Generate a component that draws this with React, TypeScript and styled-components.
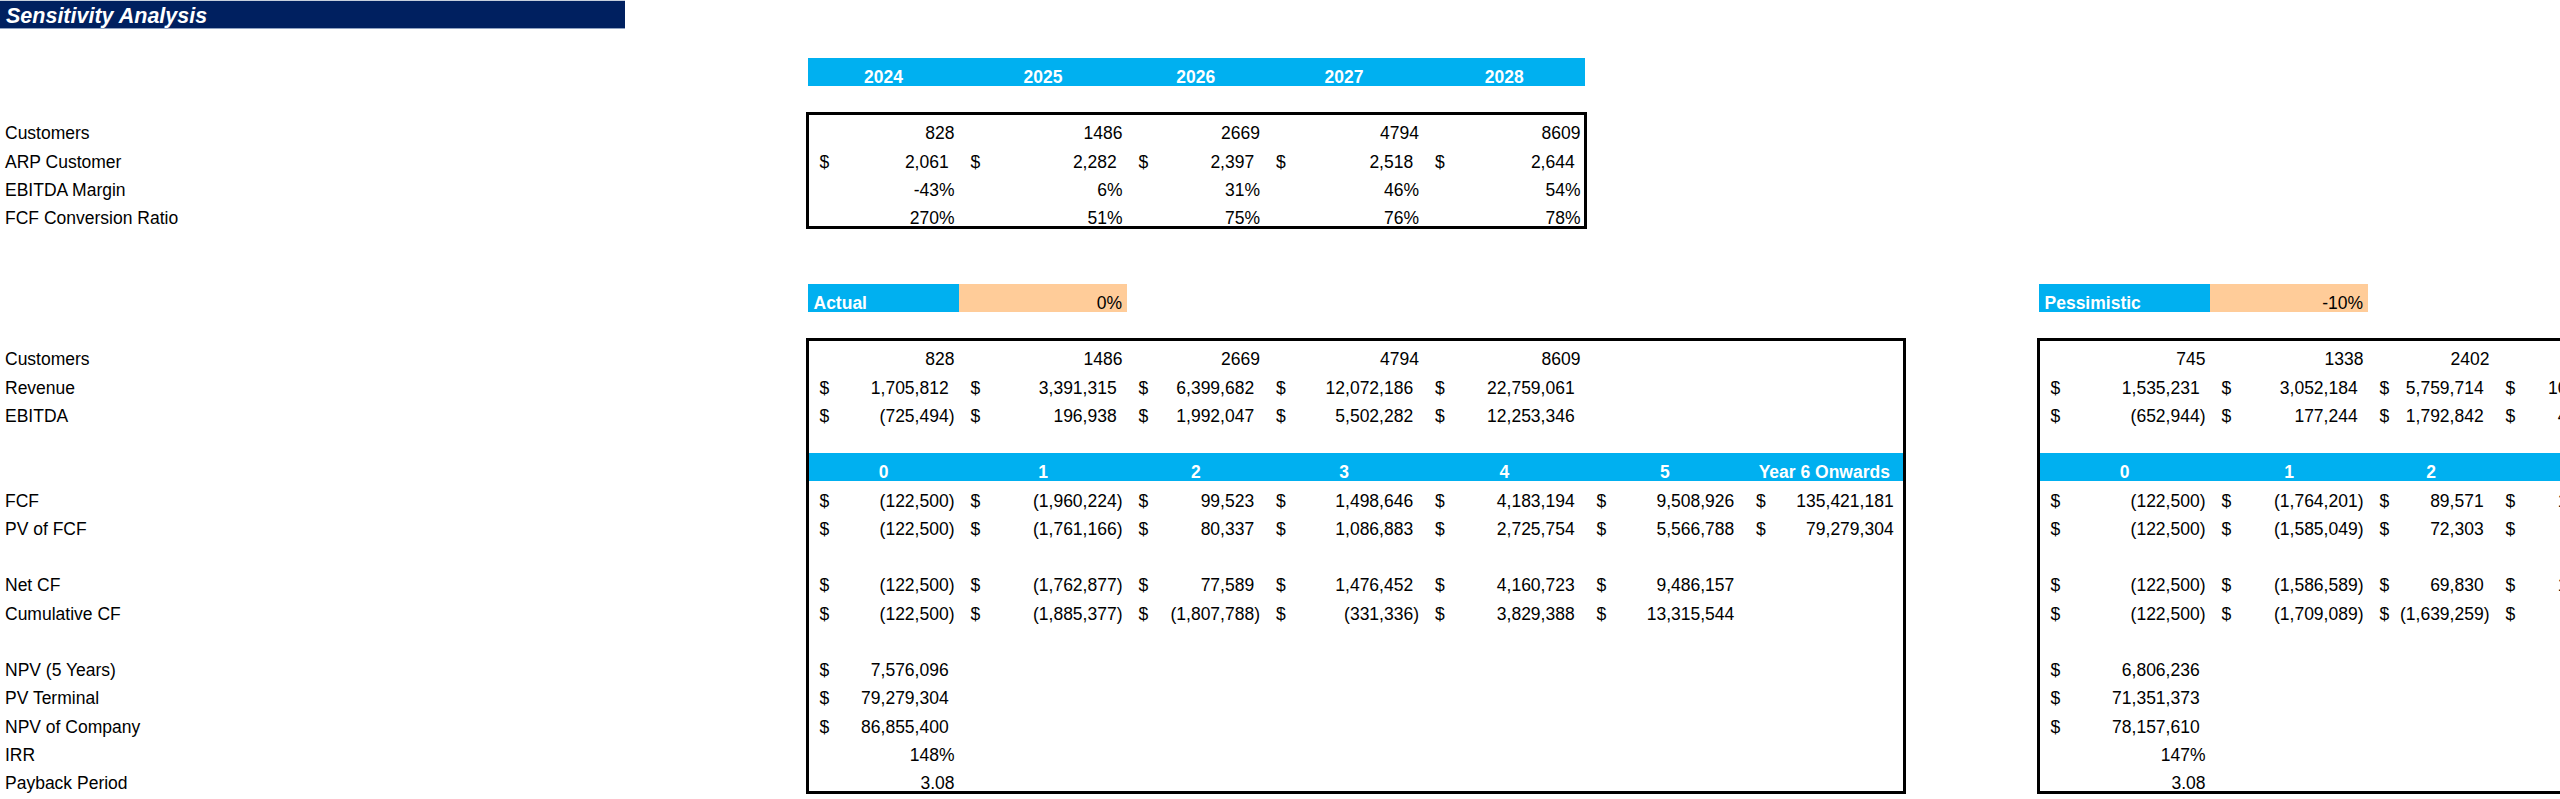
import React from "react"
import styled, { createGlobalStyle } from "styled-components"

// one spreadsheet row, in px
const ROW = 28.25
const FIRST_ROW = 29.4

const BLUE = "#00b0f0"
const PEACH = "#ffcc99"
const NAVY = "#002060"

const ACTUAL_WIDTHS = [151, 168, 137.5, 159, 161.5, 159.6, 159.4]
const PESS_WIDTHS = [171, 158, 126, 152, 160, 160, 160]

const YEARS = ["2024", "2025", "2026", "2027", "2028"]
const PERIODS = ["0", "1", "2", "3", "4", "5", "Year 6 Onwards"]

const TOP_ROWS = [
	["828", "1486", "2669", "4794", "8609"],
	["$ 2,061", "$ 2,282", "$ 2,397", "$ 2,518", "$ 2,644"],
	["-43%", "6%", "31%", "46%", "54%"],
	["270%", "51%", "75%", "76%", "78%"],
]

type BoxRow = string[] | "header" | null

interface Scenario {
	name: string
	pct: string
	widths: number[]
	offset: number
	// how many period headers are drawn (the rest runs off the sheet)
	periods: number
	rows: BoxRow[]
}

const SCENARIOS: Scenario[] = [
	{
		name: "Actual",
		pct: "0%",
		widths: ACTUAL_WIDTHS,
		offset: 0,
		periods: 7,
		rows: [
			["828", "1486", "2669", "4794", "8609"],
			["$ 1,705,812", "$ 3,391,315", "$ 6,399,682", "$ 12,072,186", "$ 22,759,061"],
			["$ (725,494)", "$ 196,938", "$ 1,992,047", "$ 5,502,282", "$ 12,253,346"],
			null,
			"header",
			["$ (122,500)", "$ (1,960,224)", "$ 99,523", "$ 1,498,646", "$ 4,183,194", "$ 9,508,926", "$ 135,421,181"],
			["$ (122,500)", "$ (1,761,166)", "$ 80,337", "$ 1,086,883", "$ 2,725,754", "$ 5,566,788", "$ 79,279,304"],
			null,
			["$ (122,500)", "$ (1,762,877)", "$ 77,589", "$ 1,476,452", "$ 4,160,723", "$ 9,486,157"],
			["$ (122,500)", "$ (1,885,377)", "$ (1,807,788)", "$ (331,336)", "$ 3,829,388", "$ 13,315,544"],
			null,
			["$ 7,576,096"],
			["$ 79,279,304"],
			["$ 86,855,400"],
			["148%"],
			["3.08"],
		],
	},
	{
		name: "Pessimistic",
		pct: "-10%",
		widths: PESS_WIDTHS,
		offset: 135,
		periods: 3,
		rows: [
			["745", "1338", "2402"],
			["$ 1,535,231", "$ 3,052,184", "$ 5,759,714", "$ 10,864,967"],
			["$ (652,944)", "$ 177,244", "$ 1,792,842", "$ 4,952,054"],
			null,
			"header",
			["$ (122,500)", "$ (1,764,201)", "$ 89,571", "$ 1,348,781"],
			["$ (122,500)", "$ (1,585,049)", "$ 72,303", "$ 978,194"],
			null,
			["$ (122,500)", "$ (1,586,589)", "$ 69,830", "$ 1,328,807"],
			["$ (122,500)", "$ (1,709,089)", "$ (1,639,259)", "$ (310,452)"],
			null,
			["$ 6,806,236"],
			["$ 71,351,373"],
			["$ 78,157,610"],
			["147%"],
			["3.08"],
		],
	},
]

// labels in column A, by sheet row index
const LABELS: Record<number, string> = {
	4: "Customers",
	5: "ARP Customer",
	6: "EBITDA Margin",
	7: "FCF Conversion Ratio",
	12: "Customers",
	13: "Revenue",
	14: "EBITDA",
	17: "FCF",
	18: "PV of FCF",
	20: "Net CF",
	21: "Cumulative CF",
	23: "NPV (5 Years)",
	24: "PV Terminal",
	25: "NPV of Company",
	26: "IRR",
	27: "Payback Period",
}

const sum = (list: number[]) => list.reduce((a, b) => a + b, 0)

const ValueCell: React.FC<{ value: string; width: number }> = ({ value, width }) => {
	if (value.startsWith("$ ")) {
		const num = value.slice(2)
		const negative = num.startsWith("(")
		return (
			<AccountingCell $w={width}>
				<span>$</span>
				<span>
					{num}
					{!negative && <Hidden>)</Hidden>}
				</span>
			</AccountingCell>
		)
	}
	return <NumberCell $w={width}>{value}</NumberCell>
}

const ScenarioPanel: React.FC<{ scenario: Scenario; withTop?: boolean }> = ({ scenario, withTop }) => {
	const { widths } = scenario
	const topWidth = sum(widths.slice(0, 5))

	return (
		<Panel $offset={scenario.offset}>
			{withTop ? (
				<>
					<Spacer $rows={1} />
					<YearBar style={{ width: topWidth }}>
						{YEARS.map((year, i) => (
							<HeadCell key={year} $w={widths[i]}>
								{year}
							</HeadCell>
						))}
					</YearBar>
					<Spacer $rows={1} />
					<Box style={{ width: topWidth }}>
						{TOP_ROWS.map((row, r) => (
							<Row key={r}>
								{row.map((value, i) => (
									<ValueCell key={i} value={value} width={widths[i]} />
								))}
							</Row>
						))}
					</Box>
					<Spacer $rows={2} />
				</>
			) : (
				<Spacer $rows={9} />
			)}

			<Row>
				<ScenarioName $w={widths[0]}>{scenario.name}</ScenarioName>
				<ScenarioPct $w={widths[1]}>{scenario.pct}</ScenarioPct>
			</Row>
			<Spacer $rows={1} />

			<Box style={{ width: sum(widths) }}>
				{scenario.rows.map((row, r) => {
					if (row === null) return <Row key={r} />
					if (row === "header")
						return (
							<HeaderRow key={r}>
								{PERIODS.slice(0, scenario.periods).map((p, i) => (
									<HeadCell key={p} $w={widths[i]}>
										{p}
									</HeadCell>
								))}
							</HeaderRow>
						)
					return (
						<Row key={r}>
							{row.map((value, i) => (
								<ValueCell key={i} value={value} width={widths[i]} />
							))}
						</Row>
					)
				})}
			</Box>
		</Panel>
	)
}

const App: React.FC = () => {
	const labelRows = Array.from({ length: 27 }, (_, i) => i + 1)

	return (
		<>
			<GlobalStyle />
			<Sheet>
				<LabelColumn>
					<TitleBar>Sensitivity Analysis</TitleBar>
					{labelRows.map((r) => (
						<Label key={r}>{LABELS[r] ?? ""}</Label>
					))}
				</LabelColumn>
				<ScenarioPanel scenario={SCENARIOS[0]} withTop />
				<ScenarioPanel scenario={SCENARIOS[1]} />
			</Sheet>
		</>
	)
}

const GlobalStyle = createGlobalStyle`
	html, body {
		margin: 0;
		padding: 0;
		background: #ffffff;
		overflow: hidden;
	}
`

const Sheet = styled.div`
	display: flex;
	align-items: flex-start;
	width: 2560px;
	height: 799px;
	overflow: hidden;
	font-family: "Liberation Sans", Arial, Helvetica, sans-serif;
	font-size: 17.5px;
	color: #000;
`

const LabelColumn = styled.div`
	flex: 0 0 808px;
	display: flex;
	flex-direction: column;
`

const TitleBar = styled.div`
	width: 625px;
	height: ${FIRST_ROW}px;
	box-sizing: border-box;
	display: flex;
	align-items: flex-end;
	padding: 0 0 1px 6px;
	background: ${NAVY};
	border-top: 1px solid #c6cfdd;
	border-bottom: 1px solid #8fa2c2;
	color: #fff;
	font-size: 21.5px;
	line-height: 22px;
	font-weight: bold;
	font-style: italic;
`

const Row = styled.div`
	flex: 0 0 auto;
	height: ${ROW}px;
	display: flex;
`

const Label = styled(Row)`
	align-items: flex-end;
	line-height: 17px;
	padding-left: 5px;
	white-space: nowrap;
`

const HeaderRow = styled(Row)`
	background: ${BLUE};
`

const YearBar = styled(Row)`
	background: ${BLUE};
`

const Panel = styled.div<{ $offset: number }>`
	flex: 0 0 auto;
	display: flex;
	flex-direction: column;
	padding-top: ${FIRST_ROW}px;
	margin-left: ${(p) => p.$offset}px;
`

const Spacer = styled.div<{ $rows: number }>`
	flex: 0 0 auto;
	height: ${(p) => p.$rows * ROW}px;
`

const Box = styled.div`
	flex: 0 0 auto;
	display: flex;
	flex-direction: column;
	outline: 3.3px solid #000;
	outline-offset: -1.65px;
`

const Cell = styled.div<{ $w: number }>`
	flex: 0 0 ${(p) => p.$w}px;
	width: ${(p) => p.$w}px;
	box-sizing: border-box;
	display: flex;
	align-items: flex-end;
	line-height: 17px;
	white-space: nowrap;
`

const NumberCell = styled(Cell)`
	justify-content: flex-end;
	padding-right: 4.5px;
`

const AccountingCell = styled(Cell)`
	justify-content: space-between;
	padding: 0 4.5px 0 11.5px;
`

const Hidden = styled.span`
	visibility: hidden;
`

const HeadCell = styled(Cell)`
	justify-content: center;
	color: #fff;
	font-weight: bold;
`

const ScenarioName = styled(Cell)`
	background: ${BLUE};
	color: #fff;
	font-weight: bold;
	padding-left: 5.5px;
`

const ScenarioPct = styled(Cell)`
	background: ${PEACH};
	justify-content: flex-end;
	padding-right: 5px;
`

export default App
